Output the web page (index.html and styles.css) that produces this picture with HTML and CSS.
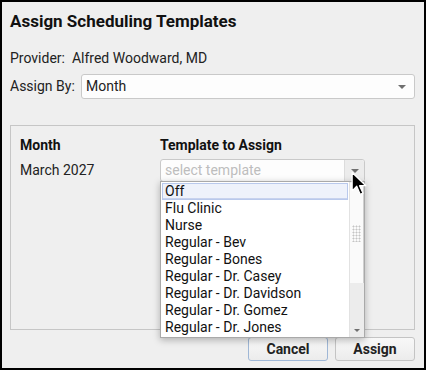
FILE: index.html
```html
<!DOCTYPE html>
<html lang="en">
<head>
    <meta charset="UTF-8">
    <title>Assign Scheduling Templates</title>
    <link rel="stylesheet" href="styles.css">
</head>
<body>
    <div class="dialog">
        <h1 class="title">Assign Scheduling Templates</h1>

        <div class="provider">Provider:&nbsp; Alfred Woodward, MD</div>

        <div class="assign-by">
            <span class="label">Assign By:</span>
            <div class="select wide">
                <span>Month</span>
                <span class="caret"></span>
            </div>
        </div>

        <div class="panel">
            <div class="head">Month</div>
            <div class="head">Template to Assign</div>
            <div class="cell">March 2027</div>
            <div class="picker">
                <div class="select small">
                    <span class="placeholder">select template</span>
                    <span class="drop-btn"><span class="caret"></span></span>
                </div>
                <div class="list">
                    <ul class="items">
                        <li class="active">Off</li>
                        <li>Flu Clinic</li>
                        <li>Nurse</li>
                        <li>Regular - Bev</li>
                        <li>Regular - Bones</li>
                        <li>Regular - Dr. Casey</li>
                        <li>Regular - Dr. Davidson</li>
                        <li>Regular - Dr. Gomez</li>
                        <li>Regular - Dr. Jones</li>
                    </ul>
                    <div class="scrollbar">
                        <div class="thumb"><span class="grip"></span></div>
                        <div class="track"></div>
                        <div class="down"><span class="caret tiny"></span></div>
                    </div>
                </div>
                <svg class="cursor" width="16" height="26" viewBox="0 0 14 22">
                    <path d="M1 1 L1 17 L5 13 L8 20 L10.5 19 L7.5 12.5 L13 12.5 Z" fill="#000" stroke="#fff" stroke-width="1.1" stroke-linejoin="round"/>
                </svg>
            </div>
        </div>

        <div class="buttons">
            <button class="btn focus">Cancel</button>
            <button class="btn">Assign</button>
        </div>
    </div>
</body>
</html>
```

FILE: styles.css
```css
body {
    margin: 0;
    font-family: Roboto, "Liberation Sans", sans-serif;
    color: #222;
}
.dialog {
    width: 426px;
    height: 370px;
    box-sizing: border-box;
    border: 2px solid #000;
    background: #efefef;
    padding: 9px 9px 0 8px;
    font-size: 14px;
    line-height: 17px;
}
.title {
    margin: 0;
    font-size: 17px;
    line-height: 20px;
    font-weight: bold;
    color: #111;
}
.provider {
    margin-top: 19px;
}
.assign-by {
    display: flex;
    align-items: center;
    margin-top: 7px;
}
.assign-by .label {
    width: 71px;
}
.select {
    display: flex;
    align-items: center;
    box-sizing: border-box;
    background: #fdfdfd;
    border: 1px solid #c9c9c9;
    border-radius: 3px;
}
.select.wide {
    flex: 1;
    height: 25px;
    padding: 0 8px 0 4px;
    justify-content: space-between;
}
.caret {
    width: 0;
    height: 0;
    border-left: 4px solid transparent;
    border-right: 4px solid transparent;
    border-top: 4px solid #6f6f6f;
}
.caret.tiny {
    border-left-width: 3px;
    border-right-width: 3px;
    border-top-width: 3px;
}
.panel {
    margin-top: 26px;
    height: 205px;
    box-sizing: border-box;
    border: 1px solid #c6c6c6;
    padding: 11px 9px 0 9px;
    display: grid;
    grid-template-columns: 140px 205px;
    grid-template-rows: 21px 23px;
    row-gap: 1px;
}
.head {
    font-weight: bold;
    color: #111;
}
.cell {
    align-self: center;
}
.picker {
    position: relative;
}
.select.small {
    height: 23px;
    padding-left: 4px;
    justify-content: space-between;
    overflow: hidden;
}
.placeholder {
    color: #bdbdbd;
}
.drop-btn {
    width: 19px;
    align-self: stretch;
    display: flex;
    align-items: center;
    justify-content: center;
    background: #ececec;
    border-left: 1px solid #dcdcdc;
}
.list {
    position: absolute;
    top: 22px;
    left: 0;
    width: 205px;
    height: 157px;
    box-sizing: border-box;
    background: #fff;
    border: 1px solid #a9a9a9;
    box-shadow: 0 2px 7px rgba(0, 0, 0, 0.28);
    display: flex;
    z-index: 2;
}
.items {
    list-style: none;
    margin: 0;
    padding: 1px 1px 0 1px;
    flex: 1;
    overflow: hidden;
    color: #111;
}
.items li {
    height: 17px;
    padding-left: 3px;
    white-space: nowrap;
}
.items li.active {
    background: #eef2fb;
    box-shadow: inset 0 0 0 1px #b9c9ec, inset 0 -2px 0 #c7d2ee;
}
.scrollbar {
    width: 14px;
    display: flex;
    flex-direction: column;
    border-left: 1px solid #e2e2e2;
    background: #ececec;
}
.thumb {
    height: 100px;
    margin-top: 1px;
    background: #fafafa;
    border-right: 1px solid #cfcfcf;
    display: flex;
    align-items: center;
    justify-content: center;
}
.grip {
    width: 9px;
    height: 17px;
    background-image: radial-gradient(circle, #c4c4c4 0.9px, transparent 1.1px);
    background-size: 3px 3px;
}
.track {
    flex: 1;
}
.down {
    height: 14px;
    display: flex;
    align-items: center;
    justify-content: center;
}
.cursor {
    position: absolute;
    left: 191px;
    top: 12px;
    z-index: 3;
}
.buttons {
    display: flex;
    justify-content: flex-end;
    gap: 7px;
    margin-top: 7px;
}
.btn {
    width: 80px;
    height: 24px;
    font-family: Roboto, "Liberation Sans", sans-serif;
    font-size: 14px;
    font-weight: bold;
    color: #222;
    background: linear-gradient(#f8f8f8, #ececec);
    border: 1px solid #c4c4c4;
    border-radius: 3px;
    padding: 0;
}
.btn.focus {
    border-color: #9fb7d6;
}
```
